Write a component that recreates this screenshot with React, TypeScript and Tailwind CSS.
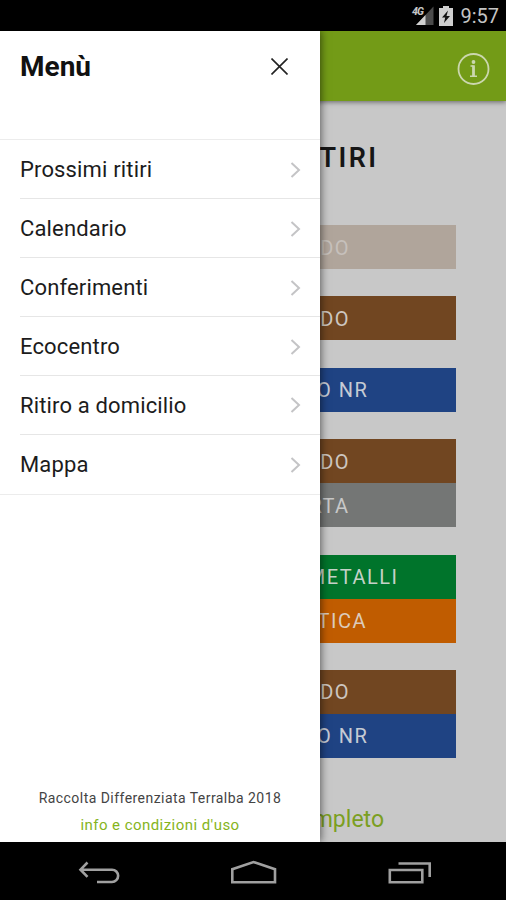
import clsx from "clsx";

const menuItems = [
  "Prossimi ritiri",
  "Calendario",
  "Conferimenti",
  "Ecocentro",
  "Ritiro a domicilio",
  "Mappa",
];

const colors = {
  umidoPast: "bg-[#b0a59b] text-[#c6c0bb]",
  umido: "bg-[#714621] text-[#cdc6c0]",
  secco: "bg-[#1f4383] text-[#c6cbd4]",
  carta: "bg-[#747675] text-[#c8c8c8]",
  vetro: "bg-[#00742b] text-[#c5d2c8]",
  plastica: "bg-[#c05c00] text-[#dccbbb]",
};

type Pickup = { label: string; type: keyof typeof colors };

const pickups: Pickup[][] = [
  [{ label: "UMIDO", type: "umidoPast" }],
  [{ label: "UMIDO", type: "umido" }],
  [{ label: "SECCO NR", type: "secco" }],
  [
    { label: "UMIDO", type: "umido" },
    { label: "CARTA", type: "carta" },
  ],
  [
    { label: "VETRO METALLI", type: "vetro" },
    { label: "PLASTICA", type: "plastica" },
  ],
  [
    { label: "UMIDO", type: "umido" },
    { label: "SECCO NR", type: "secco" },
  ],
];

function StatusBar() {
  return (
    <div className="flex h-[31px] shrink-0 items-center justify-end bg-black pr-[7px] text-[#c4c4c4]">
      <svg width="24" height="22" viewBox="0 0 24 22" className="mr-[4px]">
        <path d="M22.500 1.500v18.500H5z" fill="#4b4b4b" />
        <path d="M14.500 10v10H5z" fill="#d0d0d0" />
        <text
          x="1"
          y="10"
          fontSize="10.500"
          fontWeight="800"
          fontStyle="italic"
          fill="#c4c4c4"
          stroke="#000"
          strokeWidth="1.500"
          paintOrder="stroke"
          letterSpacing="-0.8"
        >
          4G
        </text>
      </svg>
      <svg width="14" height="20" viewBox="0 0 14 20" className="mr-[7px]">
        <path d="M4 0h6v2h4v18H0V2h4z" fill="#cfcfcf" />
        <path d="M9 4.500L3 11.500h3.200L5 17l6-7H7.500z" fill="#111" />
      </svg>
      <span className="pt-px text-[20px] leading-none">9:57</span>
    </div>
  );
}

function PickupList() {
  return (
    <div className="ml-[172px] mt-[49px] flex w-[284px] flex-col gap-[27.400px]">
      {pickups.map((day, i) => (
        <div key={i}>
          {day.map((p) => (
            <div
              key={p.label}
              className={clsx(
                "flex h-[44px] items-center justify-center pl-0.5 pt-px text-[20px] tracking-[1.500px]",
                colors[p.type],
              )}
            >
              {p.label}
            </div>
          ))}
        </div>
      ))}
    </div>
  );
}

function Drawer() {
  return (
    <aside className="absolute inset-y-0 left-0 flex w-[320px] flex-col bg-white text-[#1c1c1c] shadow-[1px_0_8px_rgba(0,0,0,0.55)]">
      <div className="flex h-[109.400px] items-start justify-between border-b border-[#ececec] pl-5 pr-8 pt-[17px]">
        <h2 className="pt-px text-[28px] font-bold leading-9 text-[#111]">
          Menù
        </h2>
        <svg
          width="17"
          height="17"
          viewBox="0 0 17 17"
          className="mt-[10px]"
          stroke="#222"
          strokeWidth="1.600"
        >
          <path d="M.5.5l16 16M16.500.5l-16 16" />
        </svg>
      </div>
      <nav className="flex flex-col border-b border-[#ececec]">
        {menuItems.map((item) => (
          <a
            key={item}
            className="ml-5 flex h-[58.900px] items-center justify-between border-b border-[#e6e6e6] pr-[19px] pt-px text-[22px] tracking-[0.150px] last:border-b-0"
          >
            {item}
            <svg
              width="11"
              height="16"
              viewBox="0 0 11 16"
              fill="none"
              stroke="#c4c4c6"
              strokeWidth="2"
            >
              <path d="M1.500 1l7.500 7-7.500 7" />
            </svg>
          </a>
        ))}
      </nav>
      <footer className="mt-auto pb-[3px] text-center">
        <p className="text-[14px] leading-[28px] tracking-[0.450px] text-[#444]">
          Raccolta Differenziata Terralba 2018
        </p>
        <p className="text-[15px] leading-[27px] tracking-[0.450px] text-[#86b41c]">
          info e condizioni d'uso
        </p>
      </footer>
    </aside>
  );
}

function NavBar() {
  return (
    <div className="flex h-[58px] shrink-0 items-center bg-black">
      <svg
        width="506"
        height="58"
        viewBox="0 842 506 58"
        fill="none"
        stroke="#a0a0a0"
        strokeWidth="2.600"
      >
        <path d="M87.500 862.500l-7 7.200 7 7.200M80.500 869.700h31.500a6 6 0 0 1 0 12.300H97" />
        <path d="M232.300 882.300v-13l21.200-7.300 21.500 7.300v13z" />
        <path d="M389.800 870h32.500v12.300h-32.500zM398.500 863.500h31.200V877" />
      </svg>
    </div>
  );
}

export default function App() {
  return (
    <div className="flex h-[900px] w-[506px] flex-col overflow-hidden bg-black font-[Roboto,sans-serif]">
      <StatusBar />
      <div className="relative h-[811px] shrink-0 overflow-hidden bg-[#c8c8c8]">
        <header className="flex h-[70px] items-center justify-end bg-[#739b17] pr-4 shadow-[0_1px_5px_rgba(0,0,0,0.5)]">
          <svg
            width="34"
            height="34"
            viewBox="0 0 34 34"
            className="mt-[6px]"
            fill="none"
            stroke="#cbd7ae"
          >
            <circle cx="17.500" cy="17" r="15" strokeWidth="1.800" />
            <path d="M14.500 14h3M14 24.300h7" strokeWidth="1.500" />
            <path d="M17.500 13.300v11" strokeWidth="2.800" />
            <circle cx="17.500" cy="10" r="1.900" fill="#cbd7ae" stroke="none" />
          </svg>
        </header>
        <h1 className="mt-[39px] pl-[9px] text-center text-[27px] font-semibold leading-9 tracking-[2.400px] text-[#161616]">
          PROSSIMI RITIRI
        </h1>
        <PickupList />
        <p className="mt-[45px] pr-[122px] text-right text-[23px] leading-[34px] text-[#7b9f22]">
          completo
        </p>
        <Drawer />
      </div>
      <NavBar />
    </div>
  );
}
